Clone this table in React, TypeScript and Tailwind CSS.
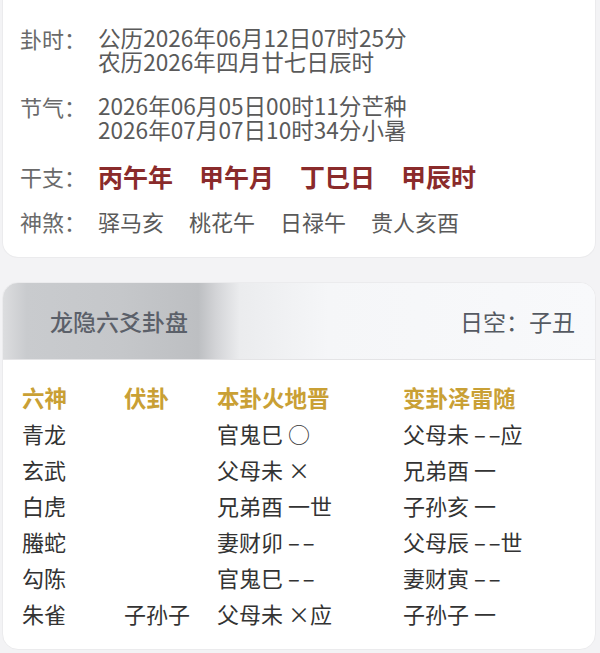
import React from "react";

const FONT = { fontFamily: '"Noto Sans CJK SC", "Noto Sans", sans-serif' };

const ganzhi = ["丙午年", "甲午月", "丁巳日", "甲辰时"];
const shensha = ["驿马亥", "桃花午", "日禄午", "贵人亥酉"];

// yao text: name, symbol, shi/ying mark
const rows = [
  { shen: "青龙", fu: "", ben: ["官鬼巳", "○", ""], bian: ["父母未", "––", "应"] },
  { shen: "玄武", fu: "", ben: ["父母未", "×", ""], bian: ["兄弟酉", "一", ""] },
  { shen: "白虎", fu: "", ben: ["兄弟酉", "一", "世"], bian: ["子孙亥", "一", ""] },
  { shen: "螣蛇", fu: "", ben: ["妻财卯", "––", ""], bian: ["父母辰", "––", "世"] },
  { shen: "勾陈", fu: "", ben: ["官鬼巳", "––", ""], bian: ["妻财寅", "––", ""] },
  { shen: "朱雀", fu: "子孙子", ben: ["父母未", "×", "应"], bian: ["子孙子", "一", ""] },
];

function Yao({ parts }: { parts: string[] }) {
  const [name, sym, mark] = parts;
  return (
    <>
      {name}{" "}
      {sym === "––" ? (
        <>
          <span className="tracking-[3px]">–</span>–
        </>
      ) : (
        sym
      )}
      {mark}
    </>
  );
}

function InfoRow({ label, children, className = "" }: { label: string; children: React.ReactNode; className?: string }) {
  return (
    <div className={`flex ${className}`}>
      <div className="w-[78px] shrink-0 text-[22px] leading-[24px] text-[#6a6a6a]">{label}</div>
      <div className="flex-1">{children}</div>
    </div>
  );
}

export default function App() {
  return (
    <div className="min-h-[653px] w-[600px] bg-[#f3f3f5] pb-[3px]" style={FONT}>
      {/* top info card */}
      <div className="ml-[2px] mr-[4px] rounded-b-[16px] border-x border-b border-[#ebebed] bg-white pl-[17px] pt-[26px] pb-[24px]">
        <InfoRow label="卦时：">
          <div className="text-[22.6px] leading-[24px] text-[#5a5a5a]">
            <p>公历2026年06月12日07时25分</p>
            <p>农历2026年四月廿七日辰时</p>
          </div>
        </InfoRow>
        <InfoRow label="节气：" className="mt-[20px]">
          <div className="text-[22.6px] leading-[24px] text-[#5a5a5a]">
            <p>2026年06月05日00时11分芒种</p>
            <p>2026年07月07日10时34分小暑</p>
          </div>
        </InfoRow>
        <div className="mt-[20px] flex items-center">
          <div className="w-[78px] shrink-0 text-[22px] leading-[28px] text-[#6a6a6a]">干支：</div>
          <div className="flex gap-[26px] text-[25px] font-bold leading-[28px] text-[#8a2b2b]">
            {ganzhi.map((g) => (
              <span key={g}>{g}</span>
            ))}
          </div>
        </div>
        <div className="mt-[19px] flex items-center">
          <div className="w-[78px] shrink-0 text-[22px] leading-[24px] text-[#6a6a6a]">神煞：</div>
          <div className="flex gap-[25px] text-[22px] leading-[24px] text-[#5a5a5a]">
            {shensha.map((s) => (
              <span key={s}>{s}</span>
            ))}
          </div>
        </div>
      </div>

      {/* hexagram card */}
      <div className="mt-[24px] ml-[2px] mr-[4px] overflow-hidden rounded-[16px] border border-[#ebebed] bg-white">
        <div className="flex h-[77px] items-center justify-between border-b border-[#e4e4e6] bg-[linear-gradient(to_right,#dcdddf_0%,#c9cbce_4%,#c5c7ca_20%,#bdbfc2_33%,#d3d4d7_36%,#ebecee_40%,#f5f6f8_55%,#f8f9fb_100%)] pl-[47px] pr-[20px]">
          <span className="text-[23px] font-medium text-[#5b6069]">龙隐六爻卦盘</span>
          <span className="text-[23px] text-[#555a62]">日空：子丑</span>
        </div>
        <div className="whitespace-nowrap pl-[19px] pt-[19px] pb-[18px] text-[22px] leading-[36px] text-[#333333]">
          <div className="flex text-[22.5px] font-bold text-[#c9a035]">
            <span className="w-[102px]">六神</span>
            <span className="w-[93px]">伏卦</span>
            <span className="w-[186px]">本卦火地晋</span>
            <span>变卦泽雷随</span>
          </div>
          {rows.map((r) => (
            <div key={r.shen} className="flex">
              <span className="w-[102px] shrink-0">{r.shen}</span>
              <span className="w-[93px] shrink-0">{r.fu}</span>
              <span className="w-[186px] shrink-0">
                <Yao parts={r.ben} />
              </span>
              <span className="shrink-0">
                <Yao parts={r.bian} />
              </span>
            </div>
          ))}
        </div>
      </div>
    </div>
  );
}
